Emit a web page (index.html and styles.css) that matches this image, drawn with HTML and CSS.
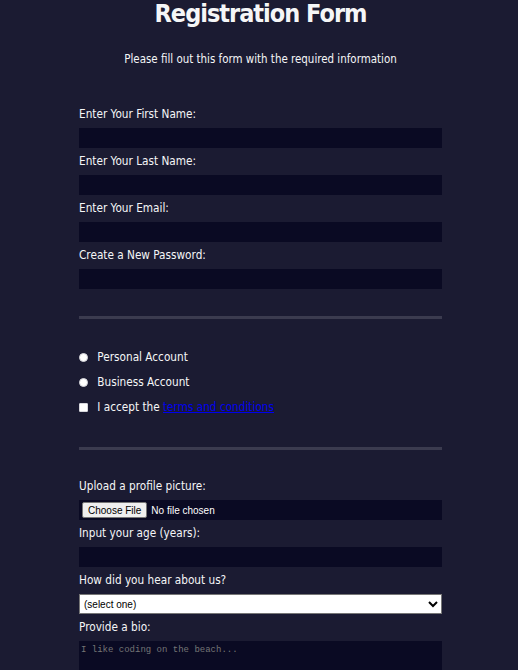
FILE: index.html
```html
<!DOCTYPE html>
<html lang="en">
<head>
<meta charset="utf-8">
<title>Registration Form</title>
<link rel="stylesheet" href="styles.css">
</head>
<body>
<h1 class="title">Registration Form</h1>
<p class="intro">Please fill out this form with the required information</p>
<form class="form" action="#">
  <fieldset class="group">
    <label class="field">Enter Your First Name: <input class="control" type="text"></label>
    <label class="field">Enter Your Last Name: <input class="control" type="text"></label>
    <label class="field">Enter Your Email: <input class="control" type="email"></label>
    <label class="field">Create a New Password: <input class="control" type="password"></label>
  </fieldset>
  <fieldset class="group">
    <label class="field choice"><input class="inline radio" type="radio" name="account"> Personal Account</label>
    <label class="field choice"><input class="inline radio" type="radio" name="account"> Business Account</label>
    <label class="field choice"><input class="inline check" type="checkbox"> I accept the <a class="terms" href="#">terms and conditions</a></label>
  </fieldset>
  <fieldset class="group last">
    <label class="field">Upload a profile picture: <input class="control file" type="file"></label>
    <label class="field">Input your age (years): <input class="control" type="number"></label>
    <label class="field">How did you hear about us?
      <select class="select">
        <option>(select one)</option>
        <option>freeCodeCamp News</option>
        <option>freeCodeCamp YouTube Channel</option>
        <option>freeCodeCamp Forum</option>
        <option>Other</option>
      </select>
    </label>
    <label class="field">Provide a bio:
      <textarea class="bio" rows="3" placeholder="I like coding on the beach..."></textarea>
    </label>
  </fieldset>
</form>
</body>
</html>
```

FILE: styles.css
```css
html, body {
  background-color: #1b1b32;
}

body {
  margin: 0 0 0 3px;
  color: #f5f6f7;
  font-family: "DejaVu Sans Condensed", "DejaVu Sans", sans-serif;
  font-size: 11.7px;
  line-height: 14px;
}

.title {
  margin: -2px auto 0;
  text-align: center;
  font-size: 25px;
  letter-spacing: -1px;
  line-height: 32px;
  font-weight: bold;
}

.intro {
  margin: 22px auto 12px;
  text-align: center;
  font-size: 11.45px;
}

.form {
  width: 363px;
  margin: 0 auto;
}

.group {
  border: none;
  margin: 0;
  padding: 23px 0 21px;
  border-bottom: 3px solid #3b3b4f;
  min-width: 0;
}

.group + .group {
  padding-bottom: 24px;
}

.group.last {
  border-bottom: none;
}

.field {
  display: block;
  margin: 6px 0;
}

.control,
.bio,
.select {
  display: block;
  box-sizing: border-box;
  width: 100%;
  margin: 7px 0 0;
}

.control {
  height: 20px;
  background-color: #0a0a23;
  border: 1px solid #0a0a23;
  color: #ffffff;
}

.file {
  padding: 1px 2px;
  font-family: "Liberation Sans", Arial, sans-serif;
  font-size: 10px;
  line-height: 16px;
  color: #ffffff;
}

.file::file-selector-button {
  font-family: "Liberation Sans", Arial, sans-serif;
  font-size: 10px;
  height: 16px;
  padding: 0 5px;
  margin-right: 4px;
  background: #efefef;
  border: 1px solid #767676;
  border-radius: 2px;
  color: #000;
}

.select {
  height: 20px;
  background: #ffffff;
  border: 1px solid #767676;
  color: #000;
  font-family: "Liberation Sans", Arial, sans-serif;
  font-size: 10px;
  padding: 0;
}

.bio {
  height: 29px;
  background-color: #0a0a23;
  border: 1px solid #0a0a23;
  color: #ffffff;
  font-family: "Liberation Mono", monospace;
  font-size: 9px;
  padding: 3px 1px;
  resize: none;
}

.bio::placeholder {
  color: #757575;
}

.choice {
  line-height: 19px;
}

.inline {
  appearance: none;
  -webkit-appearance: none;
  display: inline-block;
  box-sizing: border-box;
  width: 9px;
  height: 9px;
  margin: 0 6px 0 0;
  vertical-align: -1px;
  background: #ffffff;
  border: 1px solid #d6d6dc;
}

.radio {
  border-radius: 50%;
}

.check {
  border-radius: 1px;
}

.terms {
  color: #0000ee;
}
```
